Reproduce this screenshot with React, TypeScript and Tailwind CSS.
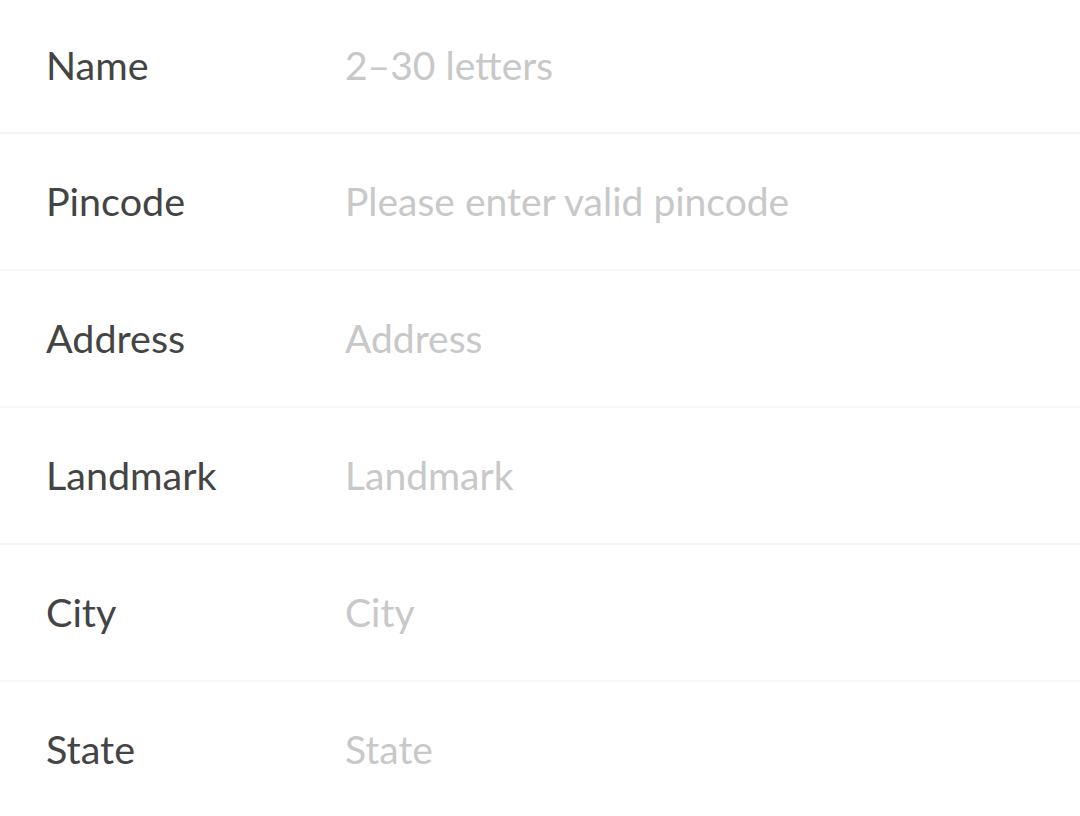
import React from "react";

const rows = [
  { label: "Name", placeholder: "2–30 letters" },
  { label: "Pincode", placeholder: "Please enter valid pincode" },
  { label: "Address", placeholder: "Address" },
  { label: "Landmark", placeholder: "Landmark" },
  { label: "City", placeholder: "City" },
  { label: "State", placeholder: "State" },
];

export default function App() {
  return (
    <div
      className="w-[1080px] h-[816px] overflow-hidden bg-white"
      style={{ fontFamily: "Lato, 'Noto Sans', sans-serif" }}
    >
      {rows.map((r, i) => (
        <div
          key={r.label}
          className={`flex items-center pb-[2px] border-b-2 border-[#f5f5f5] ${
            i === 0 ? "h-[134px]" : "h-[137px]"
          }`}
        >
          <div className="w-[345px] shrink-0 pl-[46px] text-[39.5px] text-[#444444] leading-none">
            {r.label}
          </div>
          <input
            className="flex-1 min-w-0 bg-transparent outline-none text-[39px] leading-none text-[#444444] placeholder:text-[#c8c8c8]"
            placeholder={r.placeholder}
          />
        </div>
      ))}
    </div>
  );
}
